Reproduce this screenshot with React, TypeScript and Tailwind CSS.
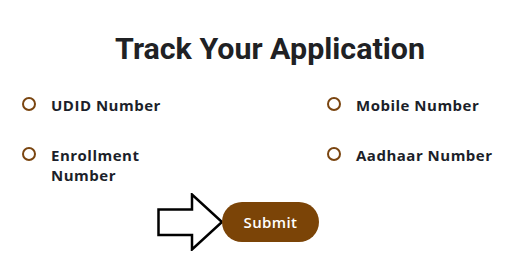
import React from "react"

const labelFont = { fontFamily: '"Open Sans", "DejaVu Sans", sans-serif' }

function Radio({ label, width }: { label: React.ReactNode; width?: string }) {
  return (
    <label className="flex items-start gap-[15px] cursor-pointer">
      <span className="mt-[2px] block h-[14px] w-[14px] shrink-0 rounded-full border-2 border-[#7a4510]" />
      <span
        className={`text-[15px] font-bold leading-[20px] tracking-[0.5px] text-[#1c1f2a] ${width ?? ""}`}
        style={labelFont}
      >
        {label}
      </span>
    </label>
  )
}

export default function App() {
  return (
    <div className="h-[270px] w-[532px] bg-white">
      <h1
        className="pt-[31px] pl-[8px] text-center text-[30.4px] font-bold leading-[36px] text-[#202124]"
        style={{ fontFamily: 'Roboto, "Liberation Sans", sans-serif' }}
      >
        Track Your Application
      </h1>

      <div className="mt-[28px] grid grid-cols-[305px_1fr] gap-y-[30px] pl-[22px]">
        <Radio label="UDID Number" />
        <Radio label="Mobile Number" />
        <Radio label="Enrollment Number" width="w-[110px]" />
        <Radio label="Aadhaar Number" />
      </div>

      <div className="mt-[8px] flex items-center pl-[157px]">
        <svg width="67" height="58" viewBox="0 0 67 58" className="-mr-[2px]">
          <path
            d="M1.5 16.5 H35 V1.5 L65 29 L35 56.5 V42 H1.5 Z"
            fill="white"
            stroke="black"
            strokeWidth="2.5"
            strokeLinejoin="miter"
          />
        </svg>
        <button
          className="h-[40px] w-[97px] rounded-full bg-[#7b4407] text-[15px] font-semibold tracking-[0.4px] text-white"
          style={labelFont}
        >
          Submit
        </button>
      </div>
    </div>
  )
}
